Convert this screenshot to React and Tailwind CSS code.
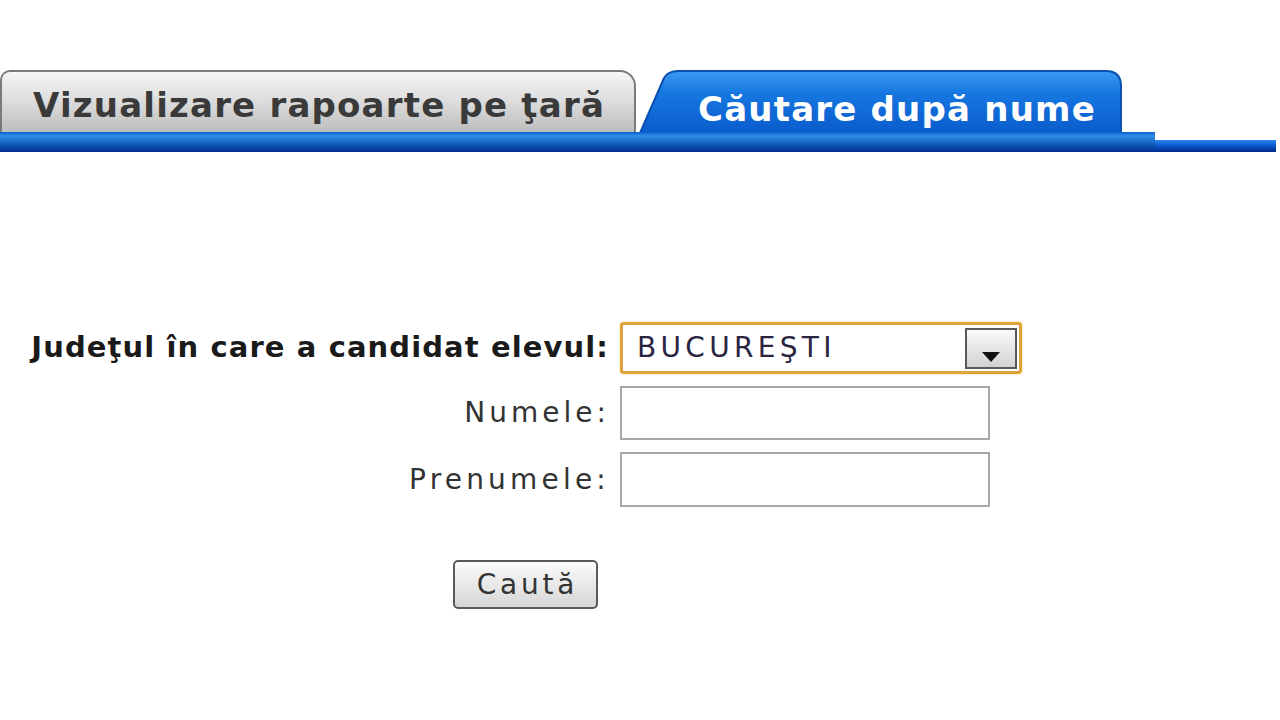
import React from "react";

function ArrowDown() {
  return (
    <svg width="18" height="10" viewBox="0 0 18 10">
      <path d="M0 0 L18 0 L9 10 Z" fill="#111" />
    </svg>
  );
}

export default function App() {
  const font = { fontFamily: '"DejaVu Sans", Verdana, sans-serif' };
  return (
    <div className="w-[1280px] h-[720px] bg-white overflow-hidden pt-[70px]" style={font}>
      {/* tab row */}
      <div className="flex items-end h-[62px]">
        <div className="w-[636px] h-[62px] rounded-tl-[10px] rounded-tr-[16px] border-2 border-b-0 border-[#7a7a7a] bg-gradient-to-b from-[#f6f6f6] via-[#dcdcdc] to-[#bdbdbd] flex items-center pl-[31px] pt-[6px]">
          <span className="text-[34px] leading-none font-bold text-[#3a3a3a] tracking-[1.2px] whitespace-nowrap">Vizualizare rapoarte pe ţară</span>
        </div>
        <div className="relative w-[486px] h-[62px]">
          <svg className="absolute inset-0" width="486" height="62" viewBox="0 0 486 62">
            <defs>
              <linearGradient id="tabBlue" x1="0" y1="0" x2="0" y2="1">
                <stop offset="0" stopColor="#3a9af0" />
                <stop offset="0.35" stopColor="#1677e0" />
                <stop offset="1" stopColor="#0a5ccc" />
              </linearGradient>
            </defs>
            <path
              d="M4 63 L28 8 Q32 1 42 1 L470 1 Q485 1 485 16 L485 63 Z"
              fill="url(#tabBlue)"
              stroke="#0b4fb0"
              strokeWidth="2"
            />
          </svg>
          <span className="relative block pl-[62px] pt-[22px] text-[34px] leading-none font-bold text-white tracking-[1.2px] whitespace-nowrap">Căutare după nume</span>
        </div>
      </div>
      {/* blue bar */}
      <div className="flex items-start">
        <div className="w-[1155px] h-[20px] bg-gradient-to-b from-[#0d5fce] via-[#2f8eea] via-20% to-[#022c8e]" />
        <div className="w-[121px] h-[12px] mt-[8px] bg-gradient-to-b from-[#2a86ea] via-[#0a56cc] to-[#02298a]" />
      </div>

      {/* form */}
      <div className="mt-[170px] flex flex-col gap-[12px]">
        <div className="flex items-center">
          <label className="w-[609px] text-right text-[29px] font-bold text-[#1a1a1a] tracking-[1.1px] whitespace-nowrap">Judeţul în care a candidat elevul:</label>
          <div className="ml-[11px] w-[402px] h-[52px] rounded-[4px] border-[3px] border-[#e0a23a] bg-white flex items-center justify-between pl-[14px] pr-[2px] shadow-[0_0_2px_#f0c070]">
            <span className="text-[28px] text-[#2a2440] tracking-[4.3px]">BUCUREŞTI</span>
            <div className="w-[52px] h-[41px] border-2 border-[#5a5a5a] bg-gradient-to-b from-[#fafafa] to-[#d2d2d2] flex items-end justify-center pb-[5px]">
              <ArrowDown />
            </div>
          </div>
        </div>
        <div className="flex items-center">
          <label className="w-[610px] text-right text-[28px] text-[#333] tracking-[4px]">Numele:</label>
          <div className="ml-[10px] w-[370px] h-[54px] border-2 border-[#a8a8a8] bg-white" />
        </div>
        <div className="flex items-center">
          <label className="w-[610px] text-right text-[28px] text-[#333] tracking-[4.2px]">Prenumele:</label>
          <div className="ml-[10px] w-[370px] h-[55px] border-2 border-[#a8a8a8] bg-white" />
        </div>
        <div className="mt-[41px] pl-[453px]">
          <button className="w-[145px] h-[49px] rounded-[5px] border-2 border-[#5a5a5a] bg-gradient-to-b from-[#fbfbfb] to-[#d6d6d6] text-[28px] text-[#333] tracking-[3.8px] pl-[4px]">
            Caută
          </button>
        </div>
      </div>
    </div>
  );
}
